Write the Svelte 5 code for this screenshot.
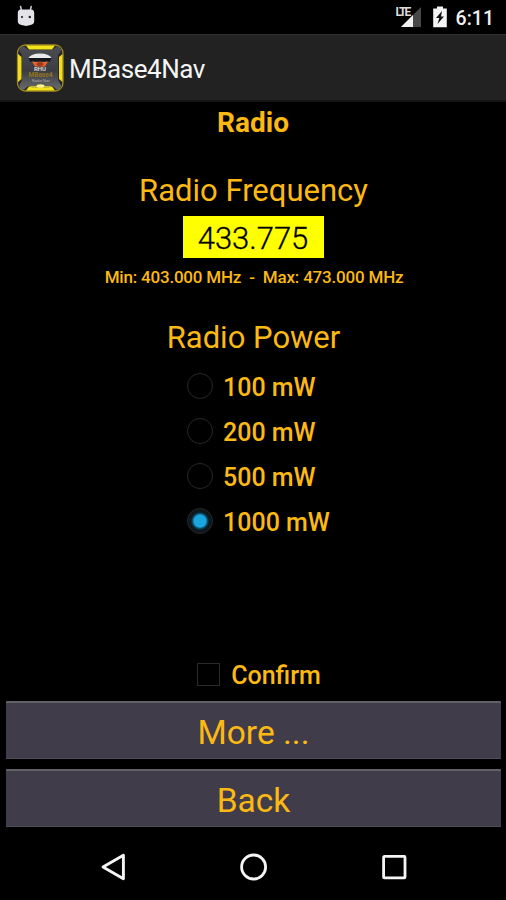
<script>
  const powers = ['100 mW', '200 mW', '500 mW', '1000 mW'];
  let selected = $state('1000 mW');
  let confirmed = $state(false);
</script>

<div class="screen">
  <div class="status">
    <svg class="droid" width="20" height="24" viewBox="0 0 20 24" aria-hidden="true">
      <path d="M4.6 1.6 L5.4 5 M15.2 1.6 L14.4 5" stroke="#c8c8cc" stroke-width="1.6" stroke-linecap="round" />
      <path d="M1.8 8 Q1.8 4.4 5 4.4 H15 Q18.2 4.4 18.2 8 V16.5 Q18 19.4 14.5 20 L10 21 L5.5 20 Q2 19.4 1.8 16.5 Z" fill="#e4e4e8" />
      <circle cx="6" cy="12" r="1.1" fill="#222" />
      <circle cx="13.8" cy="12" r="1.2" fill="#222" />
    </svg>
    <div class="indicators">
      <div class="signal">
        <svg width="27" height="22" viewBox="0 0 27 22" aria-hidden="true">
          <path d="M26 2 V22 H6 Z" fill="#48484a" />
          <path d="M18 10 V22 H6 Z" fill="#f2f2f2" />
        </svg>
        <span class="lte">LTE</span>
      </div>
      <svg class="battery" width="14" height="22" viewBox="0 0 14 22" aria-hidden="true">
        <path d="M4 0.5 H10 V2.5 H13.8 V21.3 H0.2 V2.5 H4 Z" fill="#f4f4f4" />
        <path d="M9 5 L3 12 H6.3 L4.5 18 L11 10.5 H8 Z" fill="#111" />
      </svg>
      <span class="clock">6:11</span>
    </div>
  </div>

  <header>
    <svg width="48" height="50" viewBox="0 0 48 50" aria-hidden="true">
      <defs>
        <linearGradient id="panel" x1="0" y1="0" x2="0" y2="1">
          <stop offset="0" stop-color="#4c4e53" />
          <stop offset="0.55" stop-color="#3b3c41" />
          <stop offset="1" stop-color="#686969" />
        </linearGradient>
      </defs>
      <rect x="1.5" y="2" width="45.5" height="46" rx="8" fill="#25272d" stroke="#a08a1c" stroke-width="1.3" />
      <path d="M10 2.6H39L36 6.5H13Z M10 47.5H39L36 43.5H13Z" fill="#f3e31b" />
      <path d="M2 11V39L5.5 36V14Z M46.5 11V39L43 36V14Z" fill="#f3dc1b" />
      <path d="M3.5 8 Q3 3 8 3.5 L12.5 7 H36 L40.5 3.5 Q45.5 3 45 8 L42 12 V37 L45 42 Q45.5 47 40.5 46.5 L36 43 H12.5 L8 46.5 Q3 47 3.5 42 L6 37 V12Z" fill="url(#panel)" />
      <path d="M14 43 H35 L33 45 H16Z" fill="#c9bb36" />
      <ellipse cx="24.5" cy="43" rx="4" ry="1.8" fill="#fff48a" />
      <path d="M12.5 15 Q15 10.5 24 10.5 Q33 10.5 35.5 15Z" fill="#e8e9ea" />
      <path d="M12.5 15H35.5L34 18.5H14Z" fill="#14161b" />
      <path d="M16 18.5 Q24 20 32 18.5 L29 23.5 H19Z" fill="#e8642a" />
      <path d="M20 21 L24 18 L28 21 L26 23 H22Z" fill="#a13a22" />
      <text x="24" y="28" class="logo-name">RHU</text>
      <text x="24.5" y="34" class="logo-base">MBase4</text>
      <text x="25" y="39" class="logo-sub">Radio Nav</text>
    </svg>
    <h1>MBase4Nav</h1>
  </header>

  <main>
    <h2 class="title">Radio</h2>
    <h3 class="frequency-title">Radio Frequency</h3>
    <div class="frequency">433.775</div>
    <p class="range">Min: 403.000 MHz&nbsp; -&nbsp; Max: 473.000 MHz</p>
    <h3 class="power-title">Radio Power</h3>
    <div class="powers">
      {#each powers as power}
        <label>
          <input type="radio" name="power" value={power} bind:group={selected} />
          <span class="dot"></span>
          <span>{power}</span>
        </label>
      {/each}
    </div>
    <label class="confirm">
      <input type="checkbox" bind:checked={confirmed} />
      <span class="box"></span>
      <span>Confirm</span>
    </label>
    <button class="more">More ...</button>
    <button class="back">Back</button>
  </main>

  <nav>
    <svg width="26" height="30" viewBox="0 0 26 30" aria-label="Back">
      <path d="M23.4 3.2 V26.8 L3 15 Z" fill="none" stroke="#f5f5f5" stroke-width="2.9" stroke-linejoin="round" />
    </svg>
    <svg width="30" height="30" viewBox="0 0 30 30" aria-label="Home">
      <circle cx="14.6" cy="15" r="12" fill="none" stroke="#f5f5f5" stroke-width="2.8" />
    </svg>
    <svg width="26" height="30" viewBox="0 0 26 30" aria-label="Recents">
      <rect x="2.6" y="4.4" width="21.4" height="21.4" rx="0.8" fill="none" stroke="#f5f5f5" stroke-width="2.8" />
    </svg>
  </nav>
</div>

<style>
  :global(body) { margin: 0; background: #000; }
  .screen {
    width: 506px;
    height: 900px;
    display: flex;
    flex-direction: column;
    overflow: hidden;
    background: #000;
    color: #fcb913;
    font-family: Roboto, sans-serif;
  }
  .status {
    height: 34px;
    flex: none;
    box-sizing: border-box;
    display: flex;
    justify-content: space-between;
    align-items: flex-start;
    padding: 5px 12px 0 16px;
  }
  .indicators { display: flex; align-items: flex-start; color: #f0f0f0; }
  .signal { position: relative; width: 27px; height: 22px; margin-right: 11px; }
  .lte {
    position: absolute;
    left: 1px;
    top: 2px;
    font-size: 12px;
    font-weight: 700;
    line-height: 11px;
    letter-spacing: -1.8px;
    color: #ddd;
    text-shadow: 0 0 1px #000;
  }
  .signal svg, .battery { display: block; }
  .battery { margin: 1px 9px 0 0; }
  .clock { font-size: 19.5px; line-height: 28px; font-weight: 500; }
  header {
    height: 68px;
    flex: none;
    box-sizing: border-box;
    display: flex;
    align-items: center;
    padding-left: 16px;
    background: #222;
    border-top: 1px solid #303030;
    border-bottom: 2px solid #141414;
  }
  header h1 {
    margin: 3px 0 0 5px;
    font-size: 26px;
    font-weight: 400;
    line-height: 32px;
    letter-spacing: -0.45px;
    color: #f5f5f5;
  }
  .logo-name { font-size: 6px; font-weight: 700; fill: #d8d8d8; text-anchor: middle; }
  .logo-base { font-size: 6.5px; font-weight: 700; fill: #94731f; text-anchor: middle; }
  .logo-sub { font-size: 4px; fill: #aaa; text-anchor: middle; }
  main { display: flex; flex-direction: column; align-items: center; height: 726px; }
  h2, h3, p { margin: 0; white-space: nowrap; }
  .title { margin-top: 4px; font-size: 28px; line-height: 34px; font-weight: 700; }
  h3 { font-size: 31px; line-height: 38px; font-weight: 400; padding-left: 1px; }
  .frequency-title { margin-top: 32px; }
  .frequency {
    box-sizing: border-box;
    width: 141px;
    height: 42px;
    margin-top: 6px;
    background: #ff0;
    color: #000;
    font-size: 31px;
    font-weight: 300;
    -webkit-text-stroke: 0.3px #000;
    line-height: 45px;
    text-align: center;
  }
  .range { margin: 9px 0 0 2px; font-size: 17px; line-height: 20px; font-weight: 500; letter-spacing: -0.2px; }
  .power-title { margin-top: 32px; }
  .powers { width: 142px; margin: 6px 0 0 10px; }
  label { display: flex; align-items: center; font-size: 25px; white-space: nowrap; font-weight: 500; }
  label span:last-child { padding-top: 3px; }
  input { position: absolute; opacity: 0; pointer-events: none; }
  .powers label { height: 45px; }
  .dot {
    flex: none;
    box-sizing: border-box;
    width: 26px;
    height: 26px;
    margin-right: 10px;
    border: 1.5px solid #282828;
    border-radius: 50%;
  }
  input:checked + .dot {
    background: radial-gradient(circle, #1aa5de 0 6px, #0d5878 7.2px, #0a1a22 9px, #101518 12px);
  }
  .confirm { height: 36px; margin: 113px 0 0 12px; }
  .box {
    box-sizing: border-box;
    width: 23px;
    height: 23px;
    margin-right: 11px;
    border: 1.5px solid #2a2a2a;
  }
  input:checked + .box { background: #0ba1de; }
  button {
    width: 495px;
    height: 58px;
    flex: none;
    padding: 3px 0 0;
    border: 0;
    border-top: 2px solid #626166;
    border-bottom: 1px solid #504c58;
    border-radius: 1px;
    background: #413c49;
    color: #fcb913;
    font: 400 33.5px Roboto, sans-serif;
  }
  .more { margin: 9px 0 0 1px; }
  .back { margin: 10px 0 0 1px; }
  nav {
    height: 72px;
    display: flex;
    justify-content: space-between;
    align-items: center;
    padding: 5px 99px 0 100px;
    box-sizing: border-box;
  }
</style>
